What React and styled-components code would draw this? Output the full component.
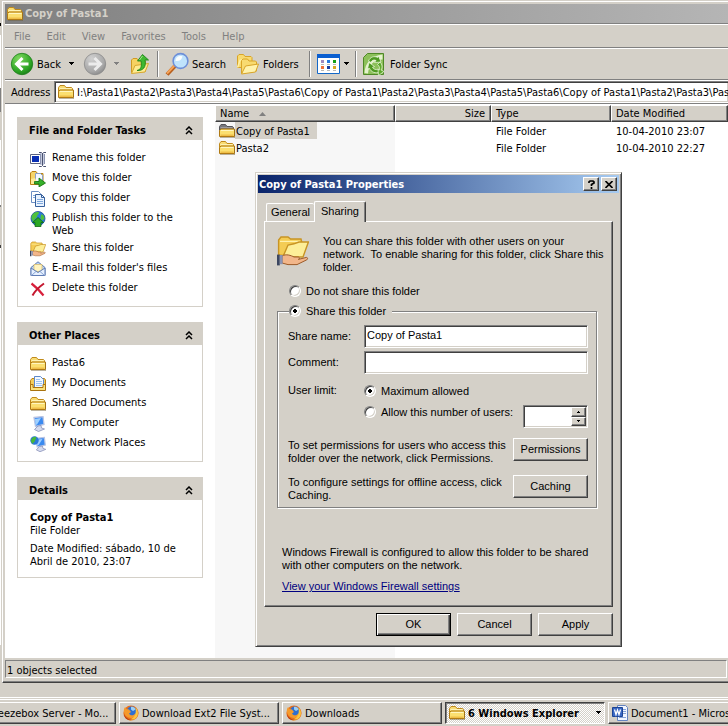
import React, { useState } from 'react';
import styled, { createGlobalStyle, css } from 'styled-components';

const GlobalStyle = createGlobalStyle`
  * { box-sizing: border-box; }
  body {
    margin: 0;
    background: #d4d0c8;
    color: #000;
    font: 11px/13px "DejaVu Sans Condensed", Tahoma, sans-serif;
    overflow-x: hidden;
  }
  button, input {
    font: inherit;
    color: inherit;
    margin: 0;
    padding: 0;
    border: 0;
    background: none;
    border-radius: 0;
    outline: 0;
  }
  svg { display: block; flex: none; }
  a { color: inherit; text-decoration: none; }
`;

const raised = css`
  border: 1px solid;
  border-color: #fff #404040 #404040 #fff;
  box-shadow: inset -1px -1px 0 #808080;
`;

const sunken = css`
  border: 1px solid;
  border-color: #808080 #fff #fff #808080;
  box-shadow: inset 1px 1px 0 #404040, inset -1px -1px 0 #d4d0c8;
  background: #fff;
`;

const Desktop = styled.div`
  position: relative;
  min-height: 100vh;
  display: flex;
  flex-direction: column;
`;

const Main = styled.div`
  flex: 1;
  display: flex;
`;

/* edge of the window that sits behind the explorer */
const BackWindow = styled.div`
  flex: 0 0 1px;
  background: linear-gradient(
    #d4d0c8 23px, #000 23px 26px, #d4d0c8 26px 35px, #fff 35px 88px, #808080 88px 112px,
    #d4d0c8 112px 140px, #fff 140px 205px, #808080 205px 207px, #d4d0c8 207px 245px,
    #404040 245px 248px, #fff 248px 645px, #d4d0c8 645px
  );
`;

const Explorer = styled.section`
  flex: 1;
  min-width: 0;
  display: flex;
  flex-direction: column;
  padding: 2px 0 2px 2px;
  margin-left: 1px;
  border-top: 1px solid #fff;
  border-left: 1px solid #fff;
  border-bottom: 1px solid #404040;
  box-shadow: inset 0 -1px 0 #808080;
  margin-top: 1px;
`;

const Groove = styled.div`
  border-top: 1px solid #808080;
  border-bottom: 1px solid #fff;
`;

const TitleBar = styled.div`
  display: flex;
  align-items: center;
  gap: 2px;
  height: 19px;
  padding-left: 2px;
  font-weight: bold;
  color: #d4d0c8;
  background: linear-gradient(90deg, #808080, #b5b5b5);
`;

const MenuBar = styled.nav`
  display: flex;
  align-items: center;
  gap: 16px;
  height: 22px;
  padding-left: 9px;
  button { color: #808080; }
`;

const ToolBar = styled.div`
  display: flex;
  align-items: center;
  height: 30px;
  padding-left: 5px;
`;

const ToolButton = styled.button`
  display: flex;
  align-items: center;
  gap: ${p => p.$gap || 3}px;
  width: ${p => p.$w}px;
  height: 26px;
  flex: none;
  white-space: nowrap;
`;

const SplitLabel = styled.span`
  margin-right: 4px;
`;

const Separator = styled.div`
  width: 2px;
  height: 26px;
  margin-right: 6px;
  border-left: 1px solid #808080;
  border-right: 1px solid #fff;
`;

const AddressBar = styled.div`
  display: flex;
  align-items: center;
  height: 22px;
  padding-left: 6px;
  label { flex: 0 0 43px; }
`;

const AddressBox = styled.div`
  ${sunken}
  flex: 1;
  min-width: 0;
  height: 22px;
  border-right: 0;
  display: flex;
  align-items: center;
  gap: 3px;
  padding-left: 3px;
  input { flex: 1; min-width: 0; height: 16px; }
`;

const Content = styled.div`
  flex: 1;
  display: flex;
  background: #fff;
  min-height: 0;
`;

const SidePane = styled.aside`
  flex: 0 0 210px;
  display: flex;
  flex-direction: column;
  gap: 15px;
  padding: 12px;
`;

const Panel = styled.section`
  border: 1px solid #d4d0c8;
`;

const PanelHead = styled.header`
  display: flex;
  align-items: center;
  justify-content: space-between;
  height: 22px;
  padding: 2px 9px 0 11px;
  background: #d4d0c8;
  h2 { margin: 0; font-size: 11px; }
`;

const PanelBody = styled.div`
  padding: 11px 12px 9px;
  p { margin: 0 0 5px; }
  p:last-child { margin: 0; }
`;

const TaskList = styled.ul`
  list-style: none;
  margin: 0;
  padding: 0;
  display: flex;
  flex-direction: column;
  gap: 4px;
  a {
    display: flex;
    align-items: flex-start;
    gap: 6px;
    min-height: 16px;
  }
  svg { height: 16px; }
`;

const FileArea = styled.div`
  flex: 1;
  min-width: 0;
  overflow: hidden;
  background: linear-gradient(90deg, #f7f7f7 180px, #fff 180px);
`;

const FileTable = styled.table`
  width: 100%;
  table-layout: fixed;
  border-collapse: separate;
  border-spacing: 0;
  th, td {
    height: 17px;
    font-weight: normal;
    text-align: left;
    white-space: nowrap;
  }
  th {
    padding: 0 5px 0 4px;
    background: #d4d0c8;
    border: 1px solid;
    border-color: #fff #404040 #404040 #fff;
    box-shadow: inset -1px -1px 0 #808080;
  }
  td { padding: 2px 5px 0; }
  td:first-child { padding: 0 4px; }
  th:nth-child(2) { text-align: right; }
`;

const HeadLabel = styled.span`
  display: inline-flex;
  align-items: center;
  gap: 10px;
`;

const FileName = styled.span`
  display: flex;
  align-items: center;
  span {
    height: 17px;
    padding: 3px 7px 1px 1px;
    background: ${p => (p.$selected ? '#d4d0c8' : 'none')};
  }
`;

const StatusBar = styled.footer`
  padding: 2px 1px 2px 0;
  div {
    height: 18px;
    padding: 3px 1px 0;
    border: 1px solid;
    border-color: #808080 #fff #fff #808080;
  }
`;

/* properties dialog */

const Dialog = styled.section`
  position: absolute;
  left: 255px;
  top: 172px;
  width: 367px;
  padding: 2px;
  background: #d4d0c8;
  border: 1px solid;
  border-color: #d4d0c8 #404040 #404040 #d4d0c8;
  box-shadow: inset 1px 1px 0 #fff, inset -1px -1px 0 #808080;
  font-family: "Liberation Sans", Arial, sans-serif;
`;

const DialogTitle = styled.header`
  display: flex;
  align-items: center;
  gap: 2px;
  height: 18px;
  padding: 0 2px 0 1px;
  color: #fff;
  font-family: "DejaVu Sans Condensed", Tahoma, sans-serif;
  background: linear-gradient(90deg, #0a246a, #a6caf0);
  h1 { flex: 1; margin: 0; font-size: 11px; }
`;

const CaptionButton = styled.button`
  ${raised}
  width: 16px;
  height: 14px;
  display: flex;
  align-items: center;
  justify-content: center;
  background: #d4d0c8;
`;

const Tabs = styled.div`
  display: flex;
  align-items: flex-end;
  padding: 8px 8px 0;
`;

const Tab = styled.button`
  position: relative;
  width: ${p => (p.$active ? 52 : 48)}px;
  height: ${p => (p.$active ? 21 : 18)}px;
  padding-bottom: ${p => (p.$active ? 2 : 0)}px;
  margin-bottom: ${p => (p.$active ? -1 : 0)}px;
  z-index: ${p => (p.$active ? 1 : 0)};
  background: #d4d0c8;
  border: 1px solid #fff;
  border-bottom: 0;
  border-radius: 2px 2px 0 0;
  ${p => p.$active
    ? 'border-right-color: #404040; box-shadow: inset -1px 0 0 #808080;'
    : 'border-right: 0;'}
`;

const TabPage = styled.div`
  ${raised}
  margin: 0 6px;
  padding: 13px 15px 13px 12px;
`;

const Intro = styled.div`
  display: flex;
  gap: 14px;
  p { margin: 0; white-space: pre; }
`;

const RadioLabel = styled.label`
  display: flex;
  align-items: center;
  gap: 5px;
  height: 14px;
  white-space: nowrap;
`;

const Radio = styled.input`
  appearance: none;
  flex: none;
  width: 12px;
  height: 12px;
  border-radius: 50%;
  border: 1px solid;
  border-color: #808080 #fff #fff #808080;
  box-shadow: inset 1px 1px 0 #404040, inset -1px -1px 0 #d4d0c8;
  background: #fff;
  &:checked { background: radial-gradient(circle, #000 2px, #fff 2px); }
`;

const ShareOption = styled.div`
  padding: 10px 0 0 12px;
`;

const Group = styled.fieldset`
  min-width: 0;
  margin: 6px 0 0;
  padding: 7px 8px 5px 10px;
  border: 1px solid #808080;
  box-shadow: 1px 1px 0 #fff, inset 1px 1px 0 #fff;
  legend {
    margin-left: 1px;
    padding: 0 6px 0 0;
    background: #d4d0c8;
  }
`;

const FieldRow = styled.div`
  display: grid;
  grid-template-columns: 76px 1fr;
  align-items: center;
  margin-bottom: 3px;
`;

const TextInput = styled.input`
  ${sunken}
  width: 100%;
  min-width: 0;
  height: 23px;
  padding: 0 2px 4px;
`;

const UserLimit = styled.div`
  display: grid;
  grid-template-columns: 76px 1fr;
  margin-top: 10px;
`;

const LimitOptions = styled.div`
  display: flex;
  flex-direction: column;
  gap: 7px;
`;

const LimitRow = styled.div`
  display: flex;
  align-items: flex-start;
  justify-content: space-between;
`;

const Spinner = styled.div`
  ${sunken}
  display: flex;
  width: 65px;
  height: 23px;
  padding: 1px;
  input { flex: 1; min-width: 0; }
`;

const SpinButtons = styled.div`
  flex: 0 0 15px;
  display: grid;
  grid-template-rows: 1fr 1fr;
  button {
    ${raised}
    display: flex;
    align-items: center;
    justify-content: center;
    background: #d4d0c8;
  }
`;

const ActionRow = styled.div`
  display: flex;
  align-items: flex-start;
  justify-content: space-between;
  height: 27px;
  margin-top: 10px;
  p { margin: 0; padding-top: 1px; white-space: nowrap; }
`;

const PushButton = styled.button`
  ${raised}
  flex: none;
  width: 75px;
  height: 23px;
  background: #d4d0c8;
  ${p => p.$default && 'border-color: #000; box-shadow: inset 1px 1px 0 #fff, inset -1px -1px 0 #404040, inset -2px -2px 0 #808080;'}
`;

const Firewall = styled.div`
  padding: 38px 0 0 5px;
  p { margin: 0 0 8px; white-space: nowrap; }
  a { color: #000080; text-decoration: underline; }
`;

const DialogButtons = styled.footer`
  display: flex;
  justify-content: flex-end;
  gap: 6px;
  padding: 6px 6px 8px;
`;

/* taskbar */

const TaskBar = styled.footer`
  margin-top: 14px;
  padding: 1px 0 2px;
  border-top: 1px solid #fff;
`;

const TaskStrip = styled.div`
  display: flex;
  gap: 3px;
  padding-top: 2px;
  margin-left: -44px;
  border-top: 1px solid #fff;
  overflow: hidden;
`;

const TaskButton = styled.button`
  ${raised}
  flex: 0 0 160px;
  min-width: 0;
  height: 22px;
  padding: 0 4px 0 3px;
  display: flex;
  align-items: center;
  gap: 3px;
  background: #d4d0c8;
  span {
    flex: 1;
    min-width: 0;
    text-align: left;
    white-space: nowrap;
  }
  ${p => p.$pressed && css`
    border-color: #404040 #fff #fff #404040;
    box-shadow: inset 1px 1px 0 #808080;
    font-weight: bold;
    padding-right: 2px;
    background: repeating-conic-gradient(#fff 0 25%, #d4d0c8 0 50%) 0 0 / 2px 2px;
  `}
`;

/* icons */

const Svg = ({ w = 16, h, v = '0 0 16 16', children }) => (
  <svg width={w} height={h || w} viewBox={v} fill="none" aria-hidden="true">{children}</svg>
);

const FolderIcon = ({ dim }) => (
  <Svg>
    <path d="M.5 12.500V3.500L2 1.500h4.500l1.500 2h5.500l1 1v8z" fill={dim ? '#77777c' : '#f8dc74'} stroke={dim ? '#55555a' : '#c08a1c'} />
    <path d="M1.500 4.500h12" stroke={dim ? '#9d9da2' : '#fff3b4'} />
    <path d="M.5 13.500V7.500L2 6h13.500v7.500z" fill="#fbdf70" stroke="#b07a14" />
    <path d="M2 7.500h12.500" stroke="#fff6c0" />
    <path d="M1.500 11.500h13v1.500h-13z" fill="#efbe48" />
    <path d="M1 14.500h15V7" stroke="#6d5a34" opacity=".45" />
  </Svg>
);

const Caret = ({ color = '#000' }) => (
  <Svg w={7} h={4} v="0 0 7 4"><path d="M1 0h5v1H5v1H4v1H3V2H2V1H1z" fill={color} /></Svg>
);

const Chevrons = () => (
  <Svg w={8} h={9} v="0 0 8 9">
    <path d="M1 4l3-3 3 3M1 8l3-3 3 3" stroke="#000" strokeWidth="1.500" />
  </Svg>
);

const NavIcon = ({ back }) => {
  const c = back ? ['#7fd85f', '#2ba323', '#1c7d19'] : ['#d0d0d0', '#a7a7a7', '#8a8a8a'];
  const id = back ? 'navBack' : 'navFwd';
  return (
    <Svg w={24} v="0 0 24 24">
      <defs>
        <radialGradient id={id} cx=".35" cy=".25" r=".8">
          <stop offset="0" stopColor={c[0]} />
          <stop offset=".75" stopColor={c[1]} />
          <stop offset="1" stopColor={c[2]} />
        </radialGradient>
      </defs>
      <circle cx="12" cy="12" r="10.700" fill={`url(#${id})`} stroke={c[2]} strokeWidth=".8" />
      <path
        d={back ? 'M12.500 6L6.500 12l6 6M7 12h11.500' : 'M11.500 6l6 6-6 6M17 12H5.500'}
        stroke={back ? '#fff' : '#ececec'}
        strokeWidth="3"
      />
    </Svg>
  );
};

const UpIcon = () => (
  <Svg w={20} h={22} v="0 0 20 22">
    <path d="M1.500 19.500V7l1.500-1.500h4L8.500 7.500h6l1 1v10z" fill="#f6d262" stroke="#d09a24" />
    <path d="M1.500 20.500L5 12.500l13.500-2-3.500 8.500z" fill="#fdeb92" stroke="#d8a830" />
    <path d="M7 17.500c4-1 5-4 4-9.500H7.500L12.500 1.500l6 5.500h-3.500c1.500 7-2 11-8 10.500z" fill="#3fb830" stroke="#1d8418" strokeWidth=".9" />
    <path d="M12.500 3l-3 4" stroke="#a4e888" />
  </Svg>
);

const SearchIcon = () => (
  <Svg w={24} v="0 0 24 24">
    <path d="M2 22.500L10 14" stroke="#b85f1c" strokeWidth="4" />
    <path d="M2 21.500L10 13" stroke="#f5a45a" strokeWidth="2" />
    <circle cx="15.500" cy="9" r="7.400" fill="#bfe3fc" stroke="#6d8fd8" strokeWidth="1.600" />
    <path d="M10.500 9c0-4 4-6 7-4.500-1 3.500-3 5-7 4.500z" fill="#fff" opacity=".9" />
  </Svg>
);

const FoldersIcon = () => (
  <Svg w={22} v="0 0 22 22">
    <path d="M.5 14.500V3L2 1.500h4.500L8 3.500h6l1 1v10z" fill="#f8da70" stroke="#d8a428" />
    <path d="M.5 14.500l2.500-7 4-1" stroke="#fff0a4" strokeWidth="1.500" />
    <path d="M4.500 20V7.500L6 6h4.500L12 8h6.500l1 1v9z" fill="#f8da70" stroke="#d8a428" />
    <path d="M4.500 21L8.500 13l13-2-3 8z" fill="#fff2ac" stroke="#d8a428" />
  </Svg>
);

const ViewsIcon = () => (
  <Svg w={23} h={20} v="0 0 23 20">
    <path d="M.5.500h22v19H.5z" fill="#fff" stroke="#1468c8" />
    <path d="M0 0h23v4H0z" fill="#0b5fd0" />
    <path d="M4 6h3v3H4z" fill="#a08ac0" />
    <path d="M10 6h3v3h-3z" fill="#2a7ae0" />
    <path d="M16 6h3v3h-3z" fill="#16a018" />
    <path d="M4 12h3v3H4z" fill="#f07038" />
    <path d="M10 12h3v3h-3z" fill="#1c3ca0" />
    <path d="M16 12h3v3h-3z" fill="#d8a820" />
    <path d="M4 10.500h3m3 0h3m3 0h3M4 16.500h3m3 0h3m3 0h3" stroke="#b8b8b8" />
  </Svg>
);

const SyncIcon = () => (
  <Svg w={23} v="0 0 23 23">
    <path d="M.5 21.500V4.500l4-4h16v21z" fill="#8cc05a" stroke="#4f8826" />
    <path d="M1.500 20C2 10 8 3 19.500 1.500v5C11 7 6 11 5 20.500z" fill="#e4f2cc" />
    <path d="M5.500 8c1.500-4 6-5.500 9-3.500l1-1.500 2.500 6-6.500.5 1.500-2c-2-1-4-.5-5 2z" fill="#4f9a22" stroke="#f2fae4" strokeWidth=".7" />
    <path d="M6 9.500l5.500 4-2 .8c1 2 3.500 3 6 1.700l1.500 3c-4.500 2-9 0-10.500-3.700L4.500 16z" fill="#4f9a22" stroke="#f2fae4" strokeWidth=".7" />
    <path d="M17 9c2.500 2.500 2.500 6 1 8l3 1.500-5.500 4-.5-6 1.200.6c.8-2 .3-4-1.700-5.600z" fill="#5ea92c" stroke="#f2fae4" strokeWidth=".7" />
  </Svg>
);

const RenameIcon = () => (
  <Svg>
    <path d="M.5 3.500h11v9H.5z" fill="#fff" stroke="#5c6480" />
    <path d="M2 5h7v6H2z" fill="#0a2fb4" />
    <path d="M10 2h4v12h-4z" fill="#c4cadc" />
    <path d="M9 1.500h2.500l1 1 1-1H16M12.500 2v12.500M9 15.500h2.500l1-1 1 1H16" stroke="#4a5270" />
    <path d="M10.500 3v10M14.500 3v10" stroke="#8a92b0" />
  </Svg>
);

const MoveIcon = () => (
  <Svg>
    <path d="M.5 13.500V2L2 .5h4L7.500 2.500H13v11z" fill="#f6d56a" stroke="#b98216" />
    <path d="M5.500 2.500h5l2 2v6h-7z" fill="#f4f8ff" stroke="#8aa0c8" />
    <path d="M1 13V8l4-1 3 6z" fill="#fdeb98" />
    <path d="M4.500 10.500H9V7l6.500 5L9 16v-3H4.500z" fill="#35b02a" stroke="#12700f" strokeWidth=".8" />
  </Svg>
);

const CopyIcon = () => (
  <Svg>
    <path d="M1.500.5h7l2 2v9h-9z" fill="#fff" stroke="#6c8fc4" />
    <path d="M5.500 3.500h6l3 3v9h-9z" fill="#e8f2ff" stroke="#36609c" />
    <path d="M11.500 3.500v3h3" stroke="#36609c" />
    <path d="M7 8.500h6M7 10.500h6M7 12.500h6M3 4.500h2M3 6.500h2" stroke="#7fa8dc" />
  </Svg>
);

const PublishIcon = () => (
  <Svg>
    <circle cx="8" cy="7.500" r="7" fill="#2a7ad8" stroke="#1a4a94" strokeWidth=".8" />
    <path d="M3 3c2-2 5-2.500 6-1.500 0 2-2 2.500-2 4S4 8 3.500 11C.8 8 1 5 3 3zM11 3.500c2-.5 3.500 1.500 3.500 4l-2 2-2-2z" fill="#4fc03c" />
    <path d="M8 6.500l5.500 5H11V15.500H5V11.500H2.500z" fill="#2ba824" stroke="#0d6a10" strokeWidth=".8" />
  </Svg>
);

const ShareIcon = ({ size = 16 }) => (
  <Svg w={size}>
    <path d="M.8 10V2.500L2 1h3.500l1.300 1H12l.5 2-2 7z" fill="#f4cc54" stroke="#c89424" strokeWidth=".7" />
    <path d="M1.500 3.200h10" stroke="#fff2ae" strokeWidth=".6" />
    <path d="M3 10.800L5.500 5l3-.6L11 3.500h4.700L13 11z" fill="#fdee98" stroke="#c89424" strokeWidth=".7" />
    <path d="M2.500 10.500c2-1.200 4.500-.3 6 .5h2.200c.8.300.6 1 0 1.200l4-1c.8.100.7.800.2 1.200L10 14.800H5.500L2.500 14z" fill="#f2b68a" stroke="#9c5a28" strokeWidth=".5" />
    <path d="M0 9.800h1.400v5.400H0z" fill="#3c4660" />
    <path d="M1.400 10h1.400v4.600H1.400z" fill="#8a94b4" />
  </Svg>
);

const MailIcon = () => (
  <Svg>
    <path d="M1 6.500L8 .8l7 5.700v8H1z" fill="#bcd4f4" stroke="#5f7cb4" />
    <path d="M4 3.500h8v7H4z" fill="#fff4c0" stroke="#d8b860" strokeWidth=".7" />
    <path d="M1 7l7 4.500L15 7v7.500H1z" fill="#e6f0ff" stroke="#5f7cb4" />
    <path d="M1.500 14.500L6.500 10m8 4.500L9.500 10" stroke="#88a4d4" />
  </Svg>
);

const DeleteIcon = () => (
  <Svg>
    <path d="M1.500 2.500c4 3 8 7 12 12" stroke="#d8203c" strokeWidth="2.200" />
    <path d="M14 2.500C9 6 5 10 2.500 14.500" stroke="#c41830" strokeWidth="2" />
  </Svg>
);

const DocsIcon = () => (
  <Svg>
    <path d="M.5 13.500V4.500L2 2.500h12.500l1 1.500v9.500z" fill="#f3cd5a" stroke="#b98216" />
    <path d="M4.500.5h6l3 3v8h-9z" fill="#f2f8ff" stroke="#5c88c8" />
    <path d="M6 3.500h4M6 5.500h6M6 7.500h6M6 9.500h6" stroke="#9cc4f0" />
    <path d="M.5 14.500v-6h2.500v3h10v-3h2.500v6z" fill="#fbe27c" stroke="#a9730f" />
  </Svg>
);

const MonitorPaths = () => (
  <>
    <path d="M4 1.500l9-1 1 8-8.500 2z" fill="#3a8af0" stroke="#b8c4e4" strokeWidth="1.300" />
    <path d="M5 3l6-1-4 6.500-1.500.5z" fill="#9fd0ff" />
    <path d="M8 10l3-.5.5 2.500 3 1-6 2.500-4-2z" fill="#d4daee" stroke="#8890b8" strokeWidth=".8" />
  </>
);

const ComputerIcon = () => <Svg><MonitorPaths /></Svg>;

const NetworkIcon = () => (
  <Svg>
    <g transform="translate(2 1) scale(.95)"><MonitorPaths /></g>
    <circle cx="4.500" cy="4.500" r="4.200" fill="#2c78d8" />
    <path d="M1 4c1-3 4-4 5-3S5 4 5 5 3 6 3 8C1.500 7 1 6 1 4z" fill="#46b83a" />
  </Svg>
);

const FirefoxIcon = () => (
  <Svg>
    <circle cx="8" cy="8" r="7.600" fill="#e8701c" />
    <circle cx="8.700" cy="6.500" r="5" fill="#2f6fd0" />
    <path d="M8 2c2-.5 4 .5 4.500 2.500L10 6 8 4.500z" fill="#9cd0f4" />
    <path d="M1 4l1-2 1.500 2L6 4.500 8 7l-2 1.500c1 2.500 5 2.500 6.500-.5.8 4-4 6-7 4.500C1.500 11 .5 7 1 4z" fill="#f59a2c" />
    <path d="M12.500 2.500c3 3 3.500 8 0 11-2.500 2-6 2.200-8.500 1 6 .5 10-4 8.500-12z" fill="#fbc640" />
    <path d="M1 9c1.500 4.500 6 6.500 10 5-4 2.500-9.500 1-10-5z" fill="#b83a10" />
  </Svg>
);

const WordIcon = () => (
  <Svg>
    <path d="M5.500.5h8l2 2v13h-10z" fill="#f2f6ff" stroke="#6484c0" />
    <path d="M11 4.500h3M11 6.500h3M11 8.500h3M7 12.500h7" stroke="#86a4d8" />
    <path d="M.5 2.500h10v9H.5z" fill="#3a68c4" stroke="#1d4494" />
    <path d="M2.500 4.500l1.500 5L5.500 5 7 9.500l1.500-5" stroke="#fff" strokeWidth="1.300" />
  </Svg>
);

const CloseGlyph = () => (
  <Svg w={8} h={7} v="0 0 8 7"><path d="M.5 0L7.500 7M7.500 0L.5 7" stroke="#000" strokeWidth="1.600" /></Svg>
);

const menus = ['File', 'Edit', 'View', 'Favorites', 'Tools', 'Help'];

const tasks = [
  { icon: RenameIcon, label: 'Rename this folder' },
  { icon: MoveIcon, label: 'Move this folder' },
  { icon: CopyIcon, label: 'Copy this folder' },
  { icon: PublishIcon, label: 'Publish this folder to the Web' },
  { icon: ShareIcon, label: 'Share this folder' },
  { icon: MailIcon, label: "E-mail this folder's files" },
  { icon: DeleteIcon, label: 'Delete this folder' },
];

const places = [
  { icon: FolderIcon, label: 'Pasta6' },
  { icon: DocsIcon, label: 'My Documents' },
  { icon: FolderIcon, label: 'Shared Documents' },
  { icon: ComputerIcon, label: 'My Computer' },
  { icon: NetworkIcon, label: 'My Network Places' },
];

const files = [
  { name: 'Copy of Pasta1', type: 'File Folder', date: '10-04-2010 23:07', selected: true },
  { name: 'Pasta2', type: 'File Folder', date: '10-04-2010 22:27' },
];

const loop = 'Pasta1\\Pasta2\\Pasta3\\Pasta4\\Pasta5\\Pasta6\\';
const path = `I:\\${loop}Copy of ${loop}Copy of ${loop}`;

const SidePanel = ({ title, children }) => (
  <Panel>
    <PanelHead>
      <h2>{title}</h2>
      <button aria-label={`Collapse ${title}`}><Chevrons /></button>
    </PanelHead>
    <PanelBody>{children}</PanelBody>
  </Panel>
);

const Links = ({ items }) => (
  <TaskList>
    {items.map(({ icon: Icon, label }) => (
      <li key={label}><a href="#"><Icon /><span>{label}</span></a></li>
    ))}
  </TaskList>
);

const ExplorerWindow = () => (
  <Explorer>
    <TitleBar><FolderIcon />Copy of Pasta1</TitleBar>
    <Groove />
    <MenuBar>
      {menus.map(m => <button key={m}>{m}</button>)}
    </MenuBar>
    <Groove />
    <ToolBar>
      <ToolButton $w={73}><NavIcon back /><SplitLabel>Back</SplitLabel><Caret /></ToolButton>
      <ToolButton $w={47} $gap={6} aria-label="Forward"><NavIcon /><Caret color="#808080" /></ToolButton>
      <ToolButton $w={27} aria-label="Up"><UpIcon /></ToolButton>
      <Separator />
      <ToolButton $w={72}><SearchIcon />Search</ToolButton>
      <ToolButton $w={72} $gap={4}><FoldersIcon />Folders</ToolButton>
      <Separator />
      <ToolButton $w={38} aria-label="Views"><ViewsIcon /><Caret /></ToolButton>
      <Separator />
      <ToolButton $w={90} $gap={4}><SyncIcon />Folder Sync</ToolButton>
    </ToolBar>
    <Groove />
    <AddressBar>
      <label htmlFor="address">Address</label>
      <AddressBox>
        <FolderIcon />
        <input id="address" defaultValue={path} />
      </AddressBox>
    </AddressBar>
    <Groove />
    <Content>
      <SidePane>
        <SidePanel title="File and Folder Tasks"><Links items={tasks} /></SidePanel>
        <SidePanel title="Other Places"><Links items={places} /></SidePanel>
        <SidePanel title="Details">
          <p><b>Copy of Pasta1</b><br />File Folder</p>
          <p>Date Modified: sábado, 10 de Abril de 2010, 23:07</p>
        </SidePanel>
      </SidePane>
      <FileArea>
        <FileTable>
          <colgroup>
            <col width="180" />
            <col width="96" />
            <col width="120" />
            <col />
          </colgroup>
          <thead>
            <tr>
              <th>
                <HeadLabel>
                  Name
                  <Svg w={7} h={4} v="0 0 7 4"><path d="M0 4h7L3.500 0z" fill="#808080" /></Svg>
                </HeadLabel>
              </th>
              <th>Size</th>
              <th>Type</th>
              <th>Date Modified</th>
            </tr>
          </thead>
          <tbody>
            {files.map(f => (
              <tr key={f.name}>
                <td>
                  <FileName $selected={f.selected}>
                    <FolderIcon dim={f.selected} />
                    <span>{f.name}</span>
                  </FileName>
                </td>
                <td />
                <td>{f.type}</td>
                <td>{f.date}</td>
              </tr>
            ))}
          </tbody>
        </FileTable>
      </FileArea>
    </Content>
    <StatusBar><div>1 objects selected</div></StatusBar>
  </Explorer>
);

const PropertiesDialog = () => {
  const [shared, setShared] = useState(true);
  const [limited, setLimited] = useState(false);

  return (
    <Dialog role="dialog" aria-labelledby="dialog-title">
      <DialogTitle>
        <h1 id="dialog-title">Copy of Pasta1 Properties</h1>
        <CaptionButton aria-label="Help">
          <Svg w={7} h={9} v="0 0 7 9">
            <path d="M1 3V1.800L2 1h3l1 .8V3L3.500 4.500V6M3.500 7v2" stroke="#000" strokeWidth="1.700" />
          </Svg>
        </CaptionButton>
        <CaptionButton aria-label="Close"><CloseGlyph /></CaptionButton>
      </DialogTitle>
      <Tabs role="tablist">
        <Tab role="tab">General</Tab>
        <Tab role="tab" $active aria-selected>Sharing</Tab>
      </Tabs>
      <TabPage>
        <Intro>
          <ShareIcon size={32} />
          <p>
            You can share this folder with other users on your<br />
            {'network.  To enable sharing for this folder, click Share this'}<br />
            folder.
          </p>
        </Intro>
        <ShareOption>
          <RadioLabel>
            <Radio type="radio" name="share" checked={!shared} onChange={() => setShared(false)} />
            Do not share this folder
          </RadioLabel>
        </ShareOption>
        <Group>
          <legend>
            <RadioLabel>
              <Radio type="radio" name="share" checked={shared} onChange={() => setShared(true)} />
              Share this folder
            </RadioLabel>
          </legend>
          <FieldRow>
            <label htmlFor="share-name">Share name:</label>
            <TextInput id="share-name" defaultValue="Copy of Pasta1" />
          </FieldRow>
          <FieldRow>
            <label htmlFor="comment">Comment:</label>
            <TextInput id="comment" />
          </FieldRow>
          <UserLimit>
            <span>User limit:</span>
            <LimitOptions>
              <RadioLabel>
                <Radio type="radio" name="limit" checked={!limited} onChange={() => setLimited(false)} />
                Maximum allowed
              </RadioLabel>
              <LimitRow>
                <RadioLabel>
                  <Radio type="radio" name="limit" checked={limited} onChange={() => setLimited(true)} />
                  Allow this number of users:
                </RadioLabel>
                <Spinner>
                  <input aria-label="Number of users" />
                  <SpinButtons>
                    <button aria-label="More"><Svg w={3} h={2} v="0 0 3 2"><path d="M1 0h1v1h1v1H0V1h1z" fill="#000" /></Svg></button>
                    <button aria-label="Fewer"><Svg w={3} h={2} v="0 0 3 2"><path d="M0 0h3v1H2v1H1V1H0z" fill="#000" /></Svg></button>
                  </SpinButtons>
                </Spinner>
              </LimitRow>
            </LimitOptions>
          </UserLimit>
          <ActionRow>
            <p>To set permissions for users who access this<br />folder over the network, click Permissions.</p>
            <PushButton>Permissions</PushButton>
          </ActionRow>
          <ActionRow>
            <p>To configure settings for offline access, click<br />Caching.</p>
            <PushButton>Caching</PushButton>
          </ActionRow>
        </Group>
        <Firewall>
          <p>Windows Firewall is configured to allow this folder to be shared<br />with other computers on the network.</p>
          <a href="#">View your Windows Firewall settings</a>
        </Firewall>
      </TabPage>
      <DialogButtons>
        <PushButton $default>OK</PushButton>
        <PushButton>Cancel</PushButton>
        <PushButton>Apply</PushButton>
      </DialogButtons>
    </Dialog>
  );
};

const App = () => (
  <Desktop>
    <GlobalStyle />
    <Main>
      <BackWindow />
      <ExplorerWindow />
    </Main>
    <PropertiesDialog />
    <TaskBar>
      <TaskStrip>
        <TaskButton><FirefoxIcon /><span>Squeezebox Server - Mo...</span></TaskButton>
        <TaskButton><FirefoxIcon /><span>Download Ext2 File Syst...</span></TaskButton>
        <TaskButton><FirefoxIcon /><span>Downloads</span></TaskButton>
        <TaskButton $pressed><FolderIcon /><span>6 Windows Explorer</span><Caret /></TaskButton>
        <TaskButton><WordIcon /><span>Document1 - Microsoft ...</span></TaskButton>
      </TaskStrip>
    </TaskBar>
  </Desktop>
);

export default App;
